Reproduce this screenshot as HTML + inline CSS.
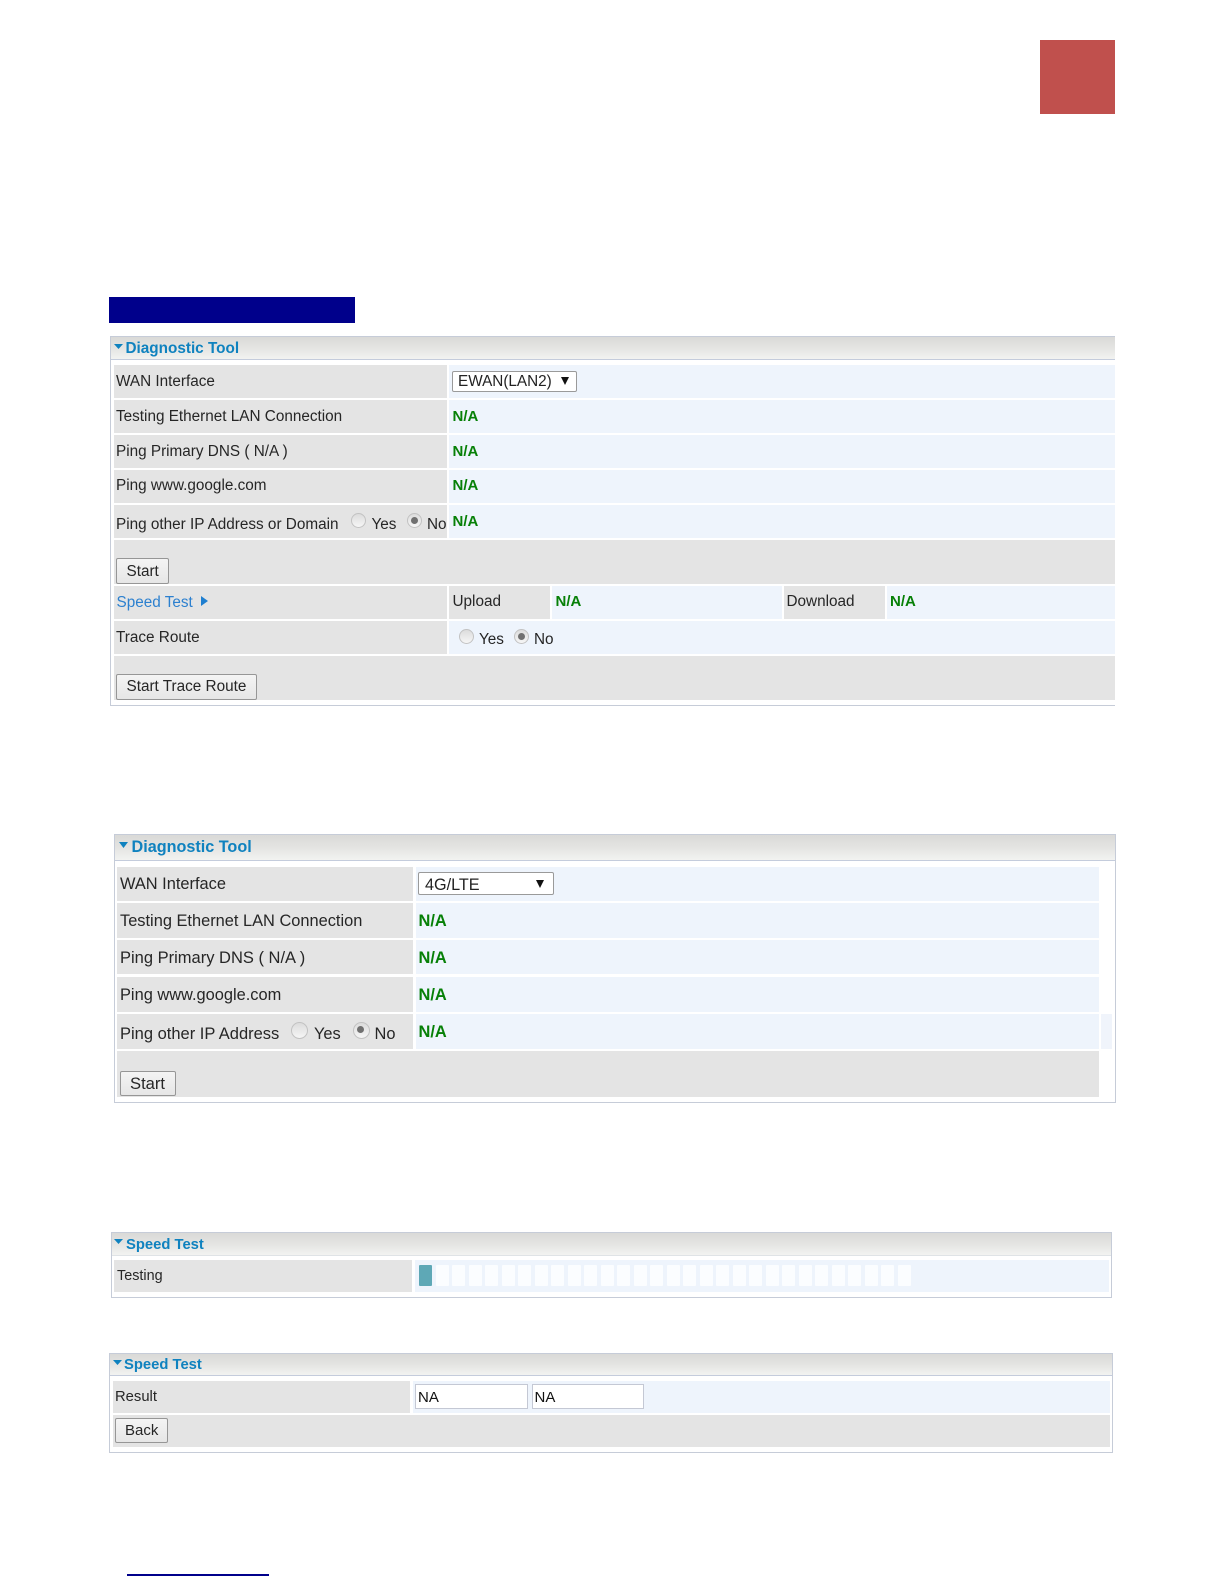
<!DOCTYPE html>
<html><head><meta charset="utf-8"><title>Diagnostic Tool</title>
<style>
html,body{margin:0;padding:0;background:#fff}
#p{position:relative;width:1224px;height:1584px;overflow:hidden;background:#fff;font-family:"Liberation Sans",Arial,sans-serif;color:#262626}
#p div,#p span{position:absolute;box-sizing:border-box}
.t{white-space:nowrap;line-height:20px;font-size:15.3px;filter:blur(.3px)}
.l{background:#e4e4e4}
.v{background:#eef4fc}
.b{border:1px solid #c6ccd8;background:#fff}
.h{background:linear-gradient(#d9d9d7,#e4e4e2 50%,#f2f3f1);border-bottom:1px solid #c4ccdc}
.hd{color:#0f82bf;font-weight:bold}
.na{color:#078007;font-weight:bold}
.s{background:#fff;border:1px solid #9a9a9a;border-radius:2px}
.btn{background:linear-gradient(#f4f4f4,#e6e6e6);border:1px solid #969696;border-radius:2px}
.r{width:15px;height:15px;border-radius:50%;background:linear-gradient(#dcdcdc,#f6f6f6);border:1px solid #c2c2c2;filter:blur(.3px)}
.r.on::after{content:"";position:absolute;left:3px;top:3px;width:7px;height:7px;border-radius:50%;background:#707070}
.blk{background:#fbfdff;width:13px;height:21px;top:1265px;border-radius:1px}
.inp{background:#fff;border:1px solid #c4c8d4}
</style></head><body><div id="p">

<div style="left:1040px;top:40px;width:75px;height:74px;background:#c0504d"></div>
<div style="left:109px;top:297px;width:246px;height:26px;background:#00008b"></div>
<div style="left:127px;top:1574px;width:142px;height:1.5px;background:#00008b"></div>

<!-- Panel 1 -->
<div class="b" style="left:110px;top:336px;width:1005px;height:370px;border-right:0"></div>
<div class="h" style="left:111px;top:337px;width:1004px;height:23px"></div>
<svg style="position:absolute;left:114px;top:344px" width="9" height="5"><path d="M0 0H9L4.5 5Z" fill="#0f82bf"/></svg>
<div class="t hd" style="left:125.5px;top:339px;font-size:15.3px">Diagnostic Tool</div>

<div class="l" style="left:114px;top:365px;width:333px;height:33px"></div><div class="v" style="left:449px;top:365px;width:666px;height:33px"></div>
<div class="l" style="left:114px;top:400px;width:333px;height:33px"></div><div class="v" style="left:449px;top:400px;width:666px;height:33px"></div>
<div class="l" style="left:114px;top:435px;width:333px;height:33px"></div><div class="v" style="left:449px;top:435px;width:666px;height:33px"></div>
<div class="l" style="left:114px;top:470px;width:333px;height:33px"></div><div class="v" style="left:449px;top:470px;width:666px;height:33px"></div>
<div class="l" style="left:114px;top:505px;width:333px;height:33px"></div><div class="v" style="left:449px;top:505px;width:666px;height:33px"></div>
<div class="l" style="left:114px;top:540px;width:1001px;height:44px"></div>
<div class="l" style="left:114px;top:586px;width:333px;height:33px"></div>
<div class="l" style="left:449px;top:586px;width:101px;height:33px"></div><div class="v" style="left:552px;top:586px;width:230px;height:33px"></div>
<div class="l" style="left:784px;top:586px;width:101px;height:33px"></div><div class="v" style="left:887px;top:586px;width:228px;height:33px"></div>
<div class="l" style="left:114px;top:621px;width:333px;height:33px"></div><div class="v" style="left:449px;top:621px;width:666px;height:33px"></div>
<div class="l" style="left:114px;top:656px;width:1001px;height:44px"></div>

<div class="t" style="left:116px;top:372px">WAN Interface</div>
<div class="s" style="left:452px;top:370.5px;width:125px;height:21.5px"></div>
<div class="t" style="left:458px;top:372px;color:#222">EWAN(LAN2)</div>
<svg style="position:absolute;left:561px;top:377px" width="8" height="8"><path d="M0 0H8L4 8Z" fill="#111"/></svg>

<div class="t" style="left:116px;top:407px">Testing Ethernet LAN Connection</div><div class="t na" style="left:452.5px;top:407px;font-size:15px">N/A</div>
<div class="t" style="left:116px;top:442px">Ping Primary DNS ( N/A )</div><div class="t na" style="left:452.5px;top:442px;font-size:15px">N/A</div>
<div class="t" style="left:116px;top:476px">Ping www.google.com</div><div class="t na" style="left:452.5px;top:476px;font-size:15px">N/A</div>
<div class="t" style="left:116px;top:515px">Ping other IP Address or Domain</div>
<div class="r" style="left:351px;top:513px"></div><div class="t" style="left:371.5px;top:515px">Yes</div>
<div class="r on" style="left:406.5px;top:513px"></div><div class="t" style="left:427px;top:515px">No</div>
<div class="t na" style="left:452.5px;top:512px;font-size:15px">N/A</div>

<div class="btn" style="left:116px;top:558px;width:53px;height:26px"></div>
<div class="t" style="left:126.5px;top:562px">Start</div>

<div class="t" style="left:116.5px;top:593px;color:#2c80cf">Speed Test</div>
<svg style="position:absolute;left:200.5px;top:596px" width="7" height="10"><path d="M0 0L7 5L0 10Z" fill="#1f7fd0"/></svg>
<div class="t" style="left:452.5px;top:592px">Upload</div><div class="t na" style="left:555.5px;top:592px;font-size:15px">N/A</div>
<div class="t" style="left:786.5px;top:592px">Download</div><div class="t na" style="left:890px;top:592px;font-size:15px">N/A</div>

<div class="t" style="left:116px;top:628px">Trace Route</div>
<div class="r" style="left:458.5px;top:629px"></div><div class="t" style="left:479px;top:630px">Yes</div>
<div class="r on" style="left:513.5px;top:629px"></div><div class="t" style="left:534px;top:630px">No</div>

<div class="btn" style="left:116px;top:674px;width:141px;height:26px"></div>
<div class="t" style="left:126.5px;top:677px">Start Trace Route</div>

<!-- Panel 2 -->
<div class="b" style="left:114px;top:834px;width:1002px;height:269px"></div>
<div class="h" style="left:115px;top:835px;width:1000px;height:26px"></div>
<svg style="position:absolute;left:118.5px;top:842px" width="9" height="6"><path d="M0 0H9L4.5 6Z" fill="#0f82bf"/></svg>
<div class="t hd" style="left:131.5px;top:837px;font-size:16.2px">Diagnostic Tool</div>

<div class="l" style="left:117px;top:867px;width:296px;height:34px"></div><div class="v" style="left:416px;top:867px;width:683px;height:34px"></div>
<div class="l" style="left:117px;top:903px;width:296px;height:35px"></div><div class="v" style="left:416px;top:903px;width:683px;height:35px"></div>
<div class="l" style="left:117px;top:940px;width:296px;height:34px"></div><div class="v" style="left:416px;top:940px;width:683px;height:34px"></div>
<div class="l" style="left:117px;top:977px;width:296px;height:35px"></div><div class="v" style="left:416px;top:977px;width:683px;height:35px"></div>
<div class="l" style="left:117px;top:1014px;width:296px;height:35px"></div><div class="v" style="left:416px;top:1014px;width:683px;height:35px"></div>
<div class="v" style="left:1101px;top:1014px;width:11px;height:35px;background:#f0f4fb"></div>
<div class="l" style="left:117px;top:1051px;width:982px;height:46px"></div>

<div class="t" style="left:120px;top:874px;font-size:16.4px">WAN Interface</div>
<div class="s" style="left:418px;top:872px;width:136px;height:23px"></div>
<div class="t" style="left:425px;top:875px;font-size:16.2px;color:#222">4G/LTE</div>
<svg style="position:absolute;left:536px;top:879.5px" width="8" height="8"><path d="M0 0H8L4 8Z" fill="#111"/></svg>

<div class="t" style="left:120px;top:911px;font-size:16.4px">Testing Ethernet LAN Connection</div><div class="t na" style="left:418.5px;top:911px;font-size:16.4px">N/A</div>
<div class="t" style="left:120px;top:948px;font-size:16.5px">Ping Primary DNS ( N/A )</div><div class="t na" style="left:418.5px;top:948px;font-size:16.4px">N/A</div>
<div class="t" style="left:120px;top:985px;font-size:16.4px">Ping www.google.com</div><div class="t na" style="left:418.5px;top:985px;font-size:16.4px">N/A</div>
<div class="t" style="left:120px;top:1024px;font-size:16.5px">Ping other IP Address</div>
<div class="r" style="left:291px;top:1022px;width:17px;height:17px"></div><div class="t" style="left:314px;top:1024px;font-size:16.4px">Yes</div>
<div class="r on" style="left:352.5px;top:1022px;width:17px;height:17px"></div><div class="t" style="left:374.5px;top:1024px;font-size:16.4px">No</div>
<div class="t na" style="left:418.5px;top:1022px;font-size:16.4px">N/A</div>

<div class="btn" style="left:120px;top:1071px;width:56px;height:25px"></div>
<div class="t" style="left:130px;top:1074px;font-size:16.6px">Start</div>

<!-- Panel 3 -->
<div class="b" style="left:111px;top:1232px;width:1001px;height:66px"></div>
<div class="h" style="left:112px;top:1233px;width:999px;height:23px;border-bottom-color:#dfe3e6"></div>
<svg style="position:absolute;left:114px;top:1239px" width="9" height="5"><path d="M0 0H9L4.5 5Z" fill="#0f82bf"/></svg>
<div class="t hd" style="left:126px;top:1235px;font-size:14.8px">Speed Test</div>
<div class="l" style="left:114px;top:1260px;width:298px;height:32px"></div><div class="v" style="left:415px;top:1260px;width:694px;height:32px"></div>
<div class="t" style="left:117px;top:1266px;font-size:14.4px">Testing</div>
<div class="blk" style="left:419px;background:#5ea8b6"></div>
<div class="blk" style="left:435.5px"></div><div class="blk" style="left:452px"></div><div class="blk" style="left:468.5px"></div><div class="blk" style="left:485px"></div><div class="blk" style="left:501.5px"></div><div class="blk" style="left:518px"></div><div class="blk" style="left:534.5px"></div><div class="blk" style="left:551px"></div><div class="blk" style="left:567.5px"></div><div class="blk" style="left:584px"></div><div class="blk" style="left:600.5px"></div><div class="blk" style="left:617px"></div><div class="blk" style="left:633.5px"></div><div class="blk" style="left:650px"></div><div class="blk" style="left:666.5px"></div><div class="blk" style="left:683px"></div><div class="blk" style="left:699.5px"></div><div class="blk" style="left:716px"></div><div class="blk" style="left:732.5px"></div><div class="blk" style="left:749px"></div><div class="blk" style="left:765.5px"></div><div class="blk" style="left:782px"></div><div class="blk" style="left:798.5px"></div><div class="blk" style="left:815px"></div><div class="blk" style="left:831.5px"></div><div class="blk" style="left:848px"></div><div class="blk" style="left:864.5px"></div><div class="blk" style="left:881px"></div><div class="blk" style="left:897.5px"></div>

<!-- Panel 4 -->
<div class="b" style="left:109px;top:1353px;width:1004px;height:100px"></div>
<div class="h" style="left:110px;top:1354px;width:1002px;height:22px"></div>
<svg style="position:absolute;left:113px;top:1360px" width="9" height="5"><path d="M0 0H9L4.5 5Z" fill="#0f82bf"/></svg>
<div class="t hd" style="left:124px;top:1355px;font-size:14.8px">Speed Test</div>
<div class="l" style="left:113px;top:1381px;width:297px;height:32px"></div><div class="v" style="left:413px;top:1381px;width:697px;height:32px"></div>
<div class="l" style="left:113px;top:1415px;width:997px;height:32px"></div>
<div class="t" style="left:115px;top:1387px;font-size:14.8px">Result</div>
<div class="inp" style="left:415px;top:1384px;width:113px;height:25px"></div>
<div class="t" style="left:418px;top:1388px;color:#111;font-size:15px">NA</div>
<div class="inp" style="left:532px;top:1384px;width:112px;height:25px"></div>
<div class="t" style="left:534.5px;top:1388px;color:#111;font-size:15px">NA</div>
<div class="btn" style="left:115px;top:1418px;width:53px;height:25px"></div>
<div class="t" style="left:125px;top:1421px;font-size:15px">Back</div>

</div></body></html>
